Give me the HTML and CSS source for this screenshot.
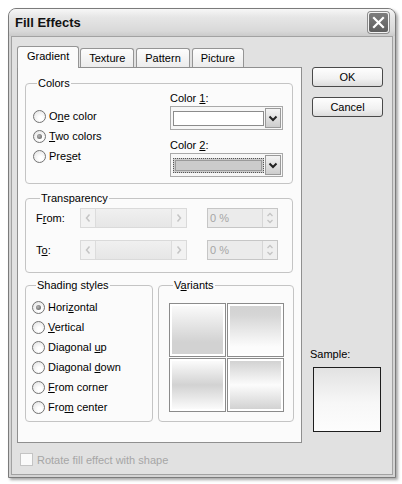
FILE: index.html
```html
<!DOCTYPE html>
<html>
<head>
<meta charset="utf-8">
<link rel="stylesheet" href="styles.css">
</head>
<body>
<div class="window">
  <div class="titlebar">
    <span class="title">Fill Effects</span>
    <span class="close"><svg width="13" height="13" viewBox="0 0 13 13"><path d="M2 2L11 11M11 2L2 11" stroke="#fff" stroke-width="2.2" stroke-linecap="square"/></svg></span>
  </div>
  <div class="client">
    <div class="main">
      <div class="leftcol">
        <div class="tabs">
          <div class="tab active">Gradient</div>
          <div class="tab">Texture</div>
          <div class="tab">Pattern</div>
          <div class="tab">Picture</div>
        </div>
        <div class="panel">
          <fieldset class="group colors">
            <legend>Colors</legend>
            <div class="colors-body">
              <div class="radios">
                <div class="radio"><span class="circle"></span><span>O<u>n</u>e color</span></div>
                <div class="radio"><span class="circle checked"></span><span><u>T</u>wo colors</span></div>
                <div class="radio"><span class="circle"></span><span>Pre<u>s</u>et</span></div>
              </div>
              <div class="pickers">
                <div class="plabel first">Color <u>1</u>:</div>
                <div class="dd"><span class="field"></span><span class="ddbtn"><svg width="14" height="18" viewBox="0 0 14 18"><path d="M3.5 7.5L7 11L10.5 7.5" fill="none" stroke="#222" stroke-width="2"/></svg></span></div>
                <div class="plabel">Color <u>2</u>:</div>
                <div class="dd"><span class="field gray"></span><span class="ddbtn"><svg width="14" height="18" viewBox="0 0 14 18"><path d="M3.5 7.5L7 11L10.5 7.5" fill="none" stroke="#222" stroke-width="2"/></svg></span></div>
              </div>
            </div>
          </fieldset>

          <fieldset class="group transp">
            <legend>Transparency</legend>
            <div class="trow">
              <span class="tlabel">F<u>r</u>om:</span>
              <span class="slider"><span class="sbtn"><svg width="8" height="10" viewBox="0 0 8 10"><path d="M5.5 1.5L2.5 5L5.5 8.5" fill="none" stroke="#c4c4c4" stroke-width="1.5"/></svg></span><span class="strack"></span><span class="sbtn"><svg width="8" height="10" viewBox="0 0 8 10"><path d="M2.5 1.5L5.5 5L2.5 8.5" fill="none" stroke="#c4c4c4" stroke-width="1.5"/></svg></span></span>
              <span class="spin"><span class="spintext">0 %</span><span class="spinbtns"><svg width="8" height="16" viewBox="0 0 8 16"><path d="M1.5 6L4 3.5L6.5 6M1.5 10L4 12.5L6.5 10" fill="none" stroke="#c4c4c4" stroke-width="1.3"/></svg></span></span>
            </div>
            <div class="trow second">
              <span class="tlabel">T<u>o</u>:</span>
              <span class="slider"><span class="sbtn"><svg width="8" height="10" viewBox="0 0 8 10"><path d="M5.5 1.5L2.5 5L5.5 8.5" fill="none" stroke="#c4c4c4" stroke-width="1.5"/></svg></span><span class="strack"></span><span class="sbtn"><svg width="8" height="10" viewBox="0 0 8 10"><path d="M2.5 1.5L5.5 5L2.5 8.5" fill="none" stroke="#c4c4c4" stroke-width="1.5"/></svg></span></span>
              <span class="spin"><span class="spintext">0 %</span><span class="spinbtns"><svg width="8" height="16" viewBox="0 0 8 16"><path d="M1.5 6L4 3.5L6.5 6M1.5 10L4 12.5L6.5 10" fill="none" stroke="#c4c4c4" stroke-width="1.3"/></svg></span></span>
            </div>
          </fieldset>

          <div class="lowrow">
            <fieldset class="group shading">
              <legend>Shading styles</legend>
              <div class="radio"><span class="circle checked"></span><span>Hori<u>z</u>ontal</span></div>
              <div class="radio"><span class="circle"></span><span><u>V</u>ertical</span></div>
              <div class="radio"><span class="circle"></span><span>Diagonal <u>u</u>p</span></div>
              <div class="radio"><span class="circle"></span><span>Diagonal <u>d</u>own</span></div>
              <div class="radio"><span class="circle"></span><span><u>F</u>rom corner</span></div>
              <div class="radio"><span class="circle"></span><span>Fro<u>m</u> center</span></div>
            </fieldset>
            <fieldset class="group variants">
              <legend>V<u>a</u>riants</legend>
              <div class="vgrid">
                <div class="tile"><div class="g g1"></div></div>
                <div class="tile"><div class="g g2"></div></div>
                <div class="tile"><div class="g g3"></div></div>
                <div class="tile"><div class="g g4"></div></div>
              </div>
            </fieldset>
          </div>
        </div>
      </div>
      <div class="rightcol">
        <div class="btn ok">OK</div>
        <div class="btn cancel">Cancel</div>
        <div class="samplelabel">Sample:</div>
        <div class="sample"></div>
      </div>
    </div>
    <div class="checkrow">
      <span class="check"></span><span class="checktext">Rotate fill effect with shape</span>
    </div>
  </div>
</div>
</body>
</html>
```

FILE: styles.css
```css
* { box-sizing: border-box; }
html, body { margin: 0; padding: 0; }
body {
  width: 402px;
  height: 484px;
  background: #fff;
  font-family: "Liberation Sans", Arial, sans-serif;
  font-size: 11px;
  color: #000;
  overflow: hidden;
}
u { text-decoration: underline; text-underline-offset: 1px; }

.window {
  margin: 8px 0 0 8px;
  width: 388px;
  height: 470px;
  border: 1px solid #7b7b7b;
  border-radius: 8px 8px 0 0;
  background: #d4d4d4;
  box-shadow: 2px 2px 3px rgba(0, 0, 0, 0.35);
  display: flex;
  flex-direction: column;
}
.titlebar {
  height: 27px;
  flex: none;
  display: flex;
  align-items: center;
  justify-content: space-between;
  padding: 0 6px;
  border-radius: 7px 7px 0 0;
  background: linear-gradient(#f7f7f7, #e6e6e6 30%, #d9d9d9 80%, #cbcbcb);
}
.title { font-weight: bold; font-size: 13px; color: #111; }
.close {
  width: 21px;
  height: 21px;
  border: 1px solid #f2f2f2;
  border-radius: 3px;
  background: linear-gradient(#7d7d7d, #5f5f5f);
  box-shadow: 0 0 0 1px #8c8c8c;
  display: flex;
  align-items: center;
  justify-content: center;
}

.client {
  flex: 1;
  margin: 0 2px 2px;
  border: 1px solid #a2a2a2;
  background: #e1e1e1;
  padding: 9px 0 0 5px;
  display: flex;
  flex-direction: column;
}
.main { display: flex; gap: 10px; }
.leftcol { width: 285px; display: flex; flex-direction: column; }

.tabs { display: flex; align-items: flex-end; height: 21px; position: relative; z-index: 1; }
.tab {
  height: 19px;
  line-height: 18px;
  padding: 0 8px;
  border: 1px solid #959595;
  border-bottom: none;
  border-radius: 3px 3px 0 0;
  background: linear-gradient(#fdfdfd, #ececec);
  margin-right: 2px;
}
.tab.active {
  height: 22px;
  line-height: 19px;
  margin-bottom: -1px;
  margin-right: 1px;
  background: #fbfbfb;
  padding: 0 9px;
}

.panel {
  height: 376px;
  border: 1px solid #8f8f8f;
  background: #fbfbfb;
  padding: 0 0 0 7px;
}

fieldset.group {
  margin: 0;
  min-width: 0;
  border: 1px solid #c4c4c4;
  border-radius: 4px;
  padding: 0;
}
fieldset.group legend {
  padding: 0 1px;
  margin-left: 4px;
  line-height: 13px;
}

fieldset.group.colors { width: 268px; margin-top: 9px; padding: 0 0 6px 7px; }
.colors-body { display: flex; }
.radios { width: 137px; padding-top: 16px; }
.radio { display: flex; align-items: center; height: 20px; gap: 3px; }
.circle {
  width: 13px;
  height: 13px;
  border-radius: 50%;
  border: 1px solid #737373;
  background: radial-gradient(circle at 60% 65%, #fff 20%, #e2e2e2 90%);
  display: flex;
  align-items: center;
  justify-content: center;
  flex: none;
}
.circle.checked::after {
  content: "";
  width: 5px;
  height: 5px;
  border-radius: 50%;
  background: radial-gradient(circle at 40% 40%, #b5b5b5, #555);
}

.pickers { width: 113px; }
.plabel { line-height: 13px; margin-top: 9px; }
.plabel.first { margin-top: 2px; }
.dd {
  margin-top: 1px;
  height: 24px;
  border: 1px solid #a9a9a9;
  background: #f7f7f7;
  display: flex;
  align-items: center;
  padding: 0 1px 0 2px;
  gap: 1px;
}
.field {
  flex: 1;
  height: 15px;
  border: 1px solid #8c8c8c;
  background: #fff;
}
.field.gray {
  background: #cbcbcb;
  border: 1px dotted #555;
  outline: 1px solid #9a9a9a;
  outline-offset: -3px;
}
.ddbtn {
  width: 16px;
  height: 20px;
  border: 1px solid #9a9a9a;
  background: linear-gradient(#f4f4f4, #cdcdcd);
  display: flex;
  align-items: center;
  justify-content: center;
}

fieldset.group.transp { width: 268px; margin-top: 8px; padding: 3px 0 12px 10px; }
.trow { display: flex; align-items: center; height: 20px; }
.trow.second { margin-top: 12px; }
.tlabel { width: 44px; }
.slider {
  width: 107px;
  height: 20px;
  border: 1px solid #dadada;
  background: linear-gradient(#f0f0f0, #e6e6e6);
  display: flex;
}
.sbtn {
  width: 15px;
  background: #f2f2f2;
  border-right: 1px solid #dcdcdc;
  display: flex;
  align-items: center;
  justify-content: center;
}
.sbtn:last-child { border-right: none; border-left: 1px solid #dcdcdc; }
.strack { flex: 1; }
.spin {
  margin-left: 20px;
  width: 71px;
  height: 20px;
  border: 1px solid #c6c6c6;
  background: #ebebeb;
  display: flex;
  align-items: center;
}
.spintext { flex: 1; padding-left: 2px; color: #a6a6a6; }
.spinbtns {
  width: 15px;
  height: 18px;
  border-left: 1px solid #d6d6d6;
  background: #efefef;
  display: flex;
  align-items: center;
  justify-content: center;
}

.lowrow { display: flex; gap: 5px; margin-top: 6px; width: 269px; }
fieldset.group.shading { width: 128px; padding: 5px 0 3px 6px; }
fieldset.group.variants { width: 136px; padding: 11px 0 9px 10px; }
.vgrid {
  display: grid;
  grid-template-columns: 57px 57px;
  grid-template-rows: 54px 54px;
  gap: 1px;
}
.tile { border: 1px solid #8b8b8b; padding: 2px; background: #fff; }
.g { width: 100%; height: 100%; }
.g1 { background: linear-gradient(#fafafa, #d2d2d2 75%, #d2d2d2); }
.g2 { background: linear-gradient(#d2d2d2, #d6d6d6 20%, #fcfcfc 85%); }
.g3 { background: linear-gradient(#fbfbfb, #d2d2d2 50%, #fbfbfb); }
.g4 { background: linear-gradient(#d2d2d2, #fcfcfc 50%, #d2d2d2); }

.rightcol { width: 71px; display: flex; flex-direction: column; }
.btn {
  height: 20px;
  line-height: 18px;
  text-align: center;
  border: 1px solid #4a4a4a;
  border-radius: 3px;
  background: linear-gradient(#fefefe, #f1f1f1 60%, #dcdcdc);
}
.ok { margin-top: 21px; }
.cancel { margin-top: 10px; }
.samplelabel { margin-top: auto; margin-left: -2px; line-height: 13px; }
.sample {
  margin: 6px 0 11px 1px;
  width: 68px;
  height: 65px;
  border: 1px solid #1e1e1e;
  background: linear-gradient(#e2e2e2, #f7f7f7 55%, #fdfdfd);
}

.checkrow { display: flex; align-items: center; margin: 10px 0 0 3px; }
.check { width: 13px; height: 13px; border: 1px solid #c4c4c4; background: #fafafa; }
.checktext { margin-left: 4px; color: #a6a6a6; }
```
